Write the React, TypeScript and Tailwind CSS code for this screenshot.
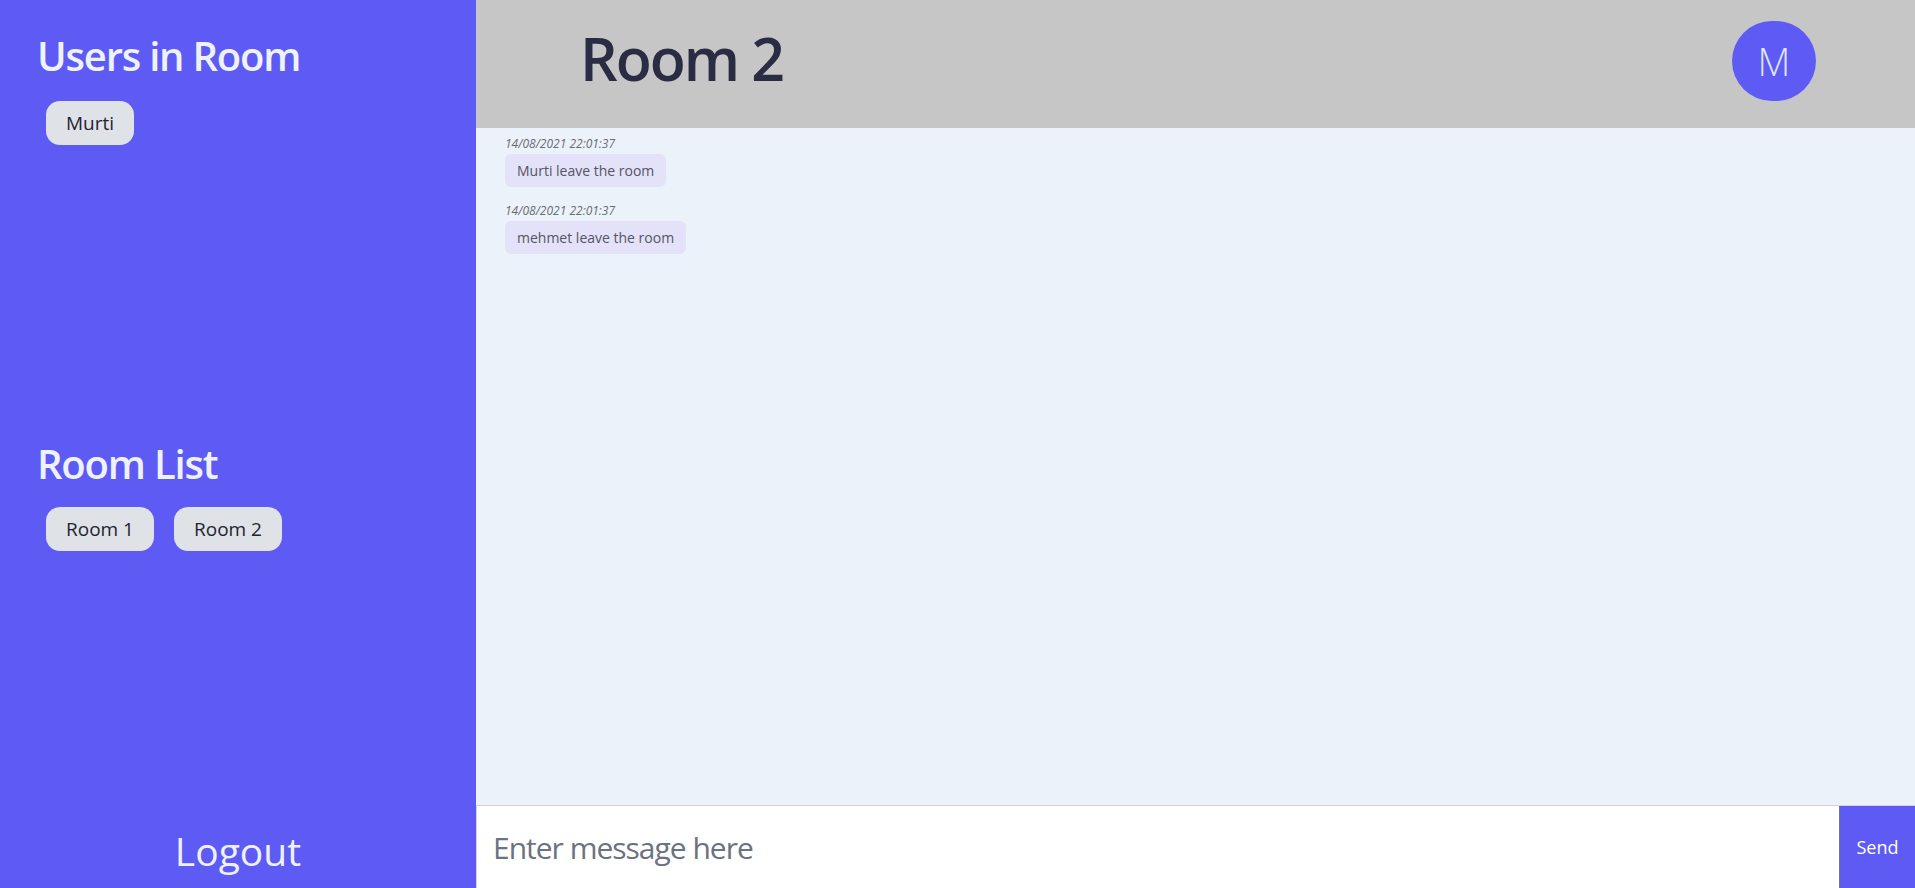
import { useState } from 'react';

const users = ['Murti'];
const rooms = ['Room 1', 'Room 2'];

const messages = [
  { id: 1, time: '14/08/2021 22:01:37', text: 'Murti leave the room' },
  { id: 2, time: '14/08/2021 22:01:37', text: 'mehmet leave the room' },
];

function Pill({ label }: { label: string }) {
  return (
    <button className="h-[44px] px-[20px] rounded-[14px] bg-[#dfe2e7] text-[#1f2433] text-[19px] flex items-center">
      {label}
    </button>
  );
}

export default function App() {
  const [text, setText] = useState('');

  return (
    <div className="flex h-screen w-full overflow-hidden font-['Open_Sans','Noto_Sans',sans-serif]">
      {/* sidebar */}
      <aside className="w-[476px] shrink-0 bg-[#5d5bf4] text-[#eef2ff] flex flex-col">
        <div className="pl-[37px] pt-[32px]">
          <h2 className="text-[40px] leading-[48px] font-semibold tracking-[-1.2px]">Users in Room</h2>
          <div className="mt-[21px] ml-[9px] flex gap-[20px]">
            {users.map((u) => (
              <Pill key={u} label={u} />
            ))}
          </div>
        </div>

        <div className="pl-[37px] mt-[295px]">
          <h2 className="text-[40px] leading-[48px] font-semibold tracking-[-1.2px]">Room List</h2>
          <div className="mt-[19px] ml-[9px] flex gap-[20px]">
            {rooms.map((r) => (
              <Pill key={r} label={r} />
            ))}
          </div>
        </div>

        <button className="mt-auto mb-[13px] text-[39px] leading-[48px] text-center w-full">
          Logout
        </button>
      </aside>

      {/* main */}
      <main className="flex-1 flex flex-col min-w-0">
        <header className="h-[128px] shrink-0 bg-[#c6c6c6] flex justify-between">
          <h1 className="ml-[104px] mt-[28px] text-[59px] leading-[60px] font-semibold tracking-[-2px] text-[#2a2c44]">
            Room 2
          </h1>
          <div className="mr-[99px] mt-[21px] w-[84px] h-[80px] rounded-full bg-[#5d5bf4] text-[#dde4f8] text-[38px] font-light flex items-center justify-center">
            M
          </div>
        </header>

        <section className="flex-1 bg-[#ebf2fa] pl-[29px] pt-[8px] overflow-y-auto">
          {messages.map((m) => (
            <div key={m.id} className="mb-[16px]">
              <div className="text-[12px] leading-[16px] italic text-[#6b6b70]">{m.time}</div>
              <div className="mt-[2px] w-fit h-[33px] px-[12px] rounded-md bg-[#e3e2f8] text-[14px] text-[#555566] flex items-center">
                {m.text}
              </div>
            </div>
          ))}
        </section>

        <form
          className="h-[83px] shrink-0 flex border-t border-[#d1d5db]"
          onSubmit={(e) => {
            e.preventDefault();
            setText('');
          }}
        >
          <input
            value={text}
            onChange={(e) => setText(e.target.value)}
            placeholder="Enter message here"
            className="flex-1 min-w-0 bg-white border-l border-[#d1d5db] pl-[16px] text-[30px] tracking-[-1px] text-[#374151] placeholder:text-[#6b7280] outline-none"
          />
          <button
            type="submit"
            className="w-[76px] shrink-0 bg-[#5d5bf4] border-l border-[#767676] text-white text-[18px] flex items-center justify-center"
          >
            Send
          </button>
        </form>
      </main>
    </div>
  );
}
